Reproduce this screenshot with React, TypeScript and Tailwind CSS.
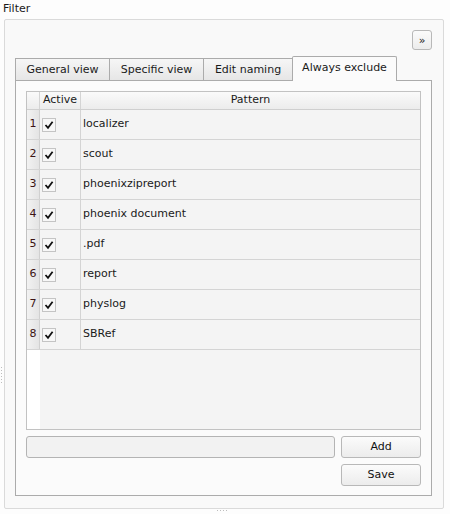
import React from "react";

const ROWS = ["localizer", "scout", "phoenixzipreport", "phoenix document", ".pdf", "report", "physlog", "SBRef"];
const TABS = [
  { label: "General view", w: "w-[95px]" },
  { label: "Specific view", w: "w-[95px]" },
  { label: "Edit naming", w: "w-[90px]" },
];

function Check() {
  return (
    <div className="flex h-[14px] w-[14px] items-center justify-center border border-[#c4c4c4] bg-[#f7f7f7]">
      <svg width="10" height="10" viewBox="0 0 10 10">
        <path d="M1.5 5 L4 7.8 L8.6 1.8" fill="none" stroke="#111" strokeWidth="1.8" />
      </svg>
    </div>
  );
}

function Btn({ children }: { children: React.ReactNode }) {
  return (
    <button className="flex h-[22px] w-[80px] items-center justify-center rounded-[3px] border border-[#b8b8b8] bg-gradient-to-b from-[#fbfbfb] to-[#ececec] text-[#111]">
      {children}
    </button>
  );
}

export default function App() {
  return (
    <div className="relative h-[514px] w-[450px] bg-[#fdfdfd] font-['DejaVu_Sans',sans-serif] text-[11px] text-[#1a1a1a]">
      <div className="h-[19px] pl-[3px] pt-[2px] leading-[14px]">Filter</div>

      {/* group box */}
      <div className="ml-[4px] flex h-[490px] w-[440px] flex-col rounded-[2px] border border-[#dadada] bg-[#f9f9f9]">
        <div className="flex justify-end pr-[11px] pt-[10px]">
          <button className="flex h-[20px] w-[20px] items-center justify-center rounded-[3px] border border-[#b8b8b8] bg-gradient-to-b from-[#fbfbfb] to-[#ececec] text-[11px] leading-none">
            »
          </button>
        </div>

        <div className="ml-[10px] mt-[6px] w-[417px]">
          {/* tab bar */}
          <div className="flex h-[24px] items-end">
            {TABS.map((t) => (
              <div
                key={t.label}
                className={`-mr-px flex h-[22px] items-center justify-center border border-b-0 border-[#ababab] bg-gradient-to-b from-[#f6f6f6] to-[#e6e6e6] pt-[1px] ${t.w}`}
              >
                {t.label}
              </div>
            ))}
            <div className="relative z-10 -mb-px flex h-[25px] w-[105px] items-center justify-center rounded-t-[2px] border border-b-0 border-[#ababab] bg-[#fbfbfb] pb-[1px]">
              Always exclude
            </div>
          </div>

          {/* tab panel */}
          <div className="flex h-[416px] flex-col border border-[#ababab] bg-[#fbfbfb] px-[10px] pt-[10px]">
            <div className="flex h-[339px] flex-col border border-[#c2c2c2] bg-[#f4f4f4]">
              <div className="flex h-[18px] border-b border-[#cfcfcf] bg-gradient-to-b from-[#fafafa] to-[#ececec]">
                <div className="w-[13px] border-r border-[#d4d4d4]" />
                <div className="flex w-[41px] items-center justify-center border-r border-[#d4d4d4]">Active</div>
                <div className="flex flex-1 items-center justify-center">Pattern</div>
              </div>
              {ROWS.map((r, i) => (
                <div key={r} className="flex h-[30px] border-b border-[#d4d4d4]">
                  <div className="flex w-[13px] items-center justify-center border-r border-[#d0d0d0] bg-gradient-to-r from-[#f2f2f2] to-[#e4e4e4] text-[#3b1414]">
                    {i + 1}
                  </div>
                  <div className="flex w-[41px] items-center border-r border-[#d4d4d4] pl-[2px]">
                    <Check />
                  </div>
                  <div className="flex flex-1 items-center pl-[2px]">{r}</div>
                </div>
              ))}
              <div className="flex flex-1">
                <div className="w-[13px] bg-white" />
                <div className="flex-1" />
              </div>
            </div>

            <div className="mt-[6px] flex gap-[6px]">
              <div className="h-[22px] w-[310px] rounded-[3px] border border-[#b4b4b4] bg-[#f2f2f2]" />
              <Btn>Add</Btn>
            </div>
            <div className="mt-[6px] flex justify-end">
              <Btn>Save</Btn>
            </div>
          </div>
        </div>
      </div>

      {/* splitter grips */}
      <div className="absolute left-[217px] top-[510px] flex gap-[2px]">
        {[0, 1, 2, 3].map((k) => (
          <div key={k} className="h-px w-px bg-[#bdbdbd]" />
        ))}
      </div>
      <div className="absolute left-[1px] top-[367px] flex flex-col gap-[2px]">
        {[0, 1, 2, 3, 4, 5].map((k) => (
          <div key={k} className="h-px w-px bg-[#bdbdbd]" />
        ))}
      </div>
    </div>
  );
}
